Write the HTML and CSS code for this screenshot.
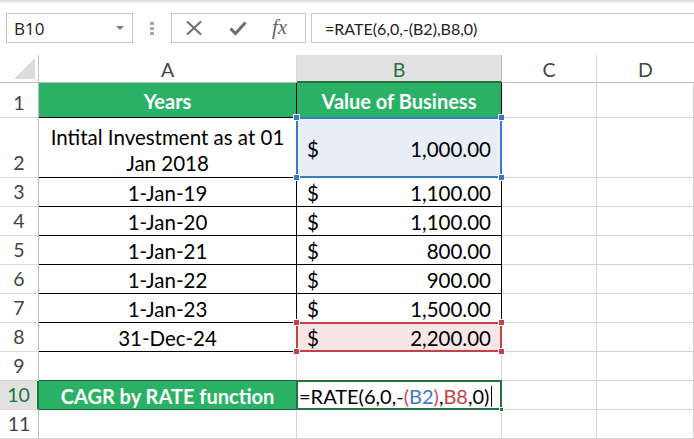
FILE: index.html
```html
<!DOCTYPE html>
<html>
<head>
<meta charset="utf-8">
<link rel="stylesheet" href="styles.css">
</head>
<body>
<div class="toolbar">
  <div class="namebox"><span class="nb-text">B10</span><span class="caret"></span></div>
  <div class="grip"><i></i><i></i><i></i></div>
  <div class="fbuttons">
    <svg class="ico" width="18" height="16" viewBox="0 0 18 16"><path d="M2 1.5 L16 14.5 M16 1.5 L2 14.5" stroke="#6d6d6d" stroke-width="2" fill="none"/></svg>
    <svg class="ico" width="18" height="16" viewBox="0 0 18 16"><path d="M1.5 8.5 L6.5 13.5 L16.5 2.5" stroke="#6d6d6d" stroke-width="3" fill="none"/></svg>
    <span class="fx">fx</span>
  </div>
  <div class="formula">=RATE(6,0,-(B2),B8,0)</div>
</div>
<div class="sheet">
  <div class="corner"><span class="tri"></span></div>
  <div class="ch">A</div>
  <div class="ch sel">B</div>
  <div class="ch">C</div>
  <div class="ch last">D</div>

  <div class="rh">1</div>
  <div class="c head tl">Years</div>
  <div class="c head tr">Value of Business</div>
  <div class="c"></div>
  <div class="c"></div>

  <div class="rh r2">2</div>
  <div class="c ta wrap">Intital Investment as at 01<br>Jan 2018</div>
  <div class="c tb money blue"><span>$</span><span>1,000.00</span><i class="h h1"></i><i class="h h2"></i><i class="h h3"></i><i class="h h4"></i></div>
  <div class="c"></div>
  <div class="c"></div>

  <div class="rh">3</div>
  <div class="c ta">1-Jan-19</div>
  <div class="c tb money"><span>$</span><span>1,100.00</span></div>
  <div class="c"></div>
  <div class="c"></div>

  <div class="rh">4</div>
  <div class="c ta">1-Jan-20</div>
  <div class="c tb money"><span>$</span><span>1,100.00</span></div>
  <div class="c"></div>
  <div class="c"></div>

  <div class="rh">5</div>
  <div class="c ta">1-Jan-21</div>
  <div class="c tb money"><span>$</span><span>800.00</span></div>
  <div class="c"></div>
  <div class="c"></div>

  <div class="rh">6</div>
  <div class="c ta">1-Jan-22</div>
  <div class="c tb money"><span>$</span><span>900.00</span></div>
  <div class="c"></div>
  <div class="c"></div>

  <div class="rh">7</div>
  <div class="c ta">1-Jan-23</div>
  <div class="c tb money"><span>$</span><span>1,500.00</span></div>
  <div class="c"></div>
  <div class="c"></div>

  <div class="rh">8</div>
  <div class="c ta">31-Dec-24</div>
  <div class="c tb money red"><span>$</span><span>2,200.00</span><i class="h h1"></i><i class="h h2"></i><i class="h h3"></i><i class="h h4"></i></div>
  <div class="c"></div>
  <div class="c"></div>

  <div class="rh">9</div>
  <div class="c"></div>
  <div class="c"></div>
  <div class="c"></div>
  <div class="c"></div>

  <div class="rh active">10</div>
  <div class="c cagr">CAGR by RATE function</div>
  <div class="c edit">=RATE(6,0,-<span class="pr">(</span><span class="bl">B2</span><span class="pr">)</span>,<span class="rd">B8</span>,0)<span class="cursor"></span><i class="gh"></i></div>
  <div class="c"></div>
  <div class="c"></div>

  <div class="rh">11</div>
  <div class="c"></div>
  <div class="c"></div>
  <div class="c"></div>
  <div class="c"></div>
</div>
</body>
</html>
```

FILE: styles.css
```css
* { box-sizing: border-box; }
html, body { margin: 0; padding: 0; background: #fff; overflow: hidden; }
body { width: 694px; height: 439px; font-family: Lato, "Open Sans", sans-serif; }

.toolbar {
  height: 55px;
  display: flex;
  align-items: flex-start;
  padding: 13px 0 0 6px;
  background: linear-gradient(#d6d6d6 0px, #ececec 2px, #fff 4px);
}
.namebox {
  width: 127px; height: 30px;
  border: 1px solid #c6c6c6;
  background: #fff;
  display: flex; align-items: center; justify-content: space-between;
  padding: 0 8px 0 7px;
  font-family: "Open Sans", sans-serif; font-size: 17px; color: #222;
}
.caret {
  width: 0; height: 0;
  border-left: 4px solid transparent; border-right: 4px solid transparent;
  border-top: 4px solid #7b7b7b;
}
.grip {
  width: 38px; height: 30px;
  display: flex; flex-direction: column; align-items: center; justify-content: center; gap: 2px;
}
.grip i { display: block; width: 4px; height: 3px; background: #a8a8a8; }
.fbuttons {
  width: 135px; height: 30px;
  border: 1px solid #c6c6c6;
  display: flex; align-items: center;
  padding-left: 13px; gap: 26px;
}
.fx {
  font-family: "Liberation Serif", serif; font-style: italic; font-size: 21px; color: #666;
  margin-left: -1px; margin-top: -2px;
}
.formula {
  flex: 1; height: 30px; margin-left: 5px; margin-right: -2px;
  border: 1px solid #c6c6c6;
  display: flex; align-items: center; padding-left: 13px;
  font-family: Lato, sans-serif; font-size: 16px; color: #222;
}

.sheet {
  display: grid;
  grid-template-columns: 39px 258px 205px 95px 97px;
  grid-template-rows: 28px 35px 60px repeat(9, 29px);
  font-size: 20.5px; color: #000;
}
.corner {
  border-right: 1px solid #c4c4c4; border-bottom: 1px solid #bdbdbd;
  display: flex; align-items: flex-end; justify-content: flex-end; padding: 0 3px 3px 0;
}
.tri {
  width: 0; height: 0;
  border-left: 21px solid transparent;
  border-bottom: 21px solid #dcdcdc;
}
.ch {
  border-bottom: 1px solid #bdbdbd; border-right: 1px solid #d9d9d9;
  display: flex; align-items: center; justify-content: center;
  color: #444; font-size: 19.5px; padding-top: 2px;
}
.ch.sel { background: #e1e1e1; color: #217346; border-bottom: 2px solid #217346; border-right-color: #bdbdbd; }
.ch.last { border-right: none; }
.rh {
  border-right: 1px solid #bdbdbd; border-bottom: 1px solid #dadada;
  display: flex; align-items: flex-end; justify-content: center;
  color: #444; font-size: 19.5px; padding-bottom: 3px;
}
.rh.active { background: #e1e1e1; color: #217346; border-right: 2px solid #217346; }
.c {
  border-right: 1px solid #d4d4d4; border-bottom: 1px solid #d4d4d4;
  position: relative;
  display: flex; align-items: center;
}
.c.head {
  background: #29b265; color: #fff; font-weight: bold; font-size: 20px;
  justify-content: center; border-bottom: 1px solid #000; border-right: 1px solid #000;
  padding-top: 2px;
}
.c.ta { justify-content: center; border-bottom: 1px solid #000; border-right: 1px solid #000; padding-top: 2px; }
.c.wrap { text-align: center; line-height: 26px; padding-top: 4px; }
.c.tb { border-bottom: 1px solid #000; border-right: 1px solid #000; }
.c.money { justify-content: space-between; padding: 2px 10px 0 10px; }
.c.blue { background: #e8eef8; }
.c.red { background: #f8e6e6; }
.c.blue::after, .c.red::after, .c.edit::after {
  content: ""; position: absolute; left: -1px; top: -1px; right: -1px; bottom: -1px;
  border: 2px solid #3d78c9;
}
.c.red::after { border-color: #c3424a; }
.c.edit::after { border-color: #217346; }
.h {
  position: absolute; width: 7px; height: 7px; background: #3d78c9; border: 1px solid #fff; z-index: 2;
}
.red .h { background: #c3424a; }
.h1 { left: -4px; top: -4px; }
.h2 { right: -4px; top: -4px; }
.h3 { left: -4px; bottom: -4px; }
.h4 { right: -4px; bottom: -4px; }
.c.cagr {
  background: #29b265; color: #fff; font-weight: bold; font-size: 20px; justify-content: center;
  border: 1px solid #1e5e3a; border-left: none; margin-top: -1px; padding-top: 2px;
}
.c.edit { padding: 2px 0 0 2px; white-space: nowrap; font-size: 20px; }
.pr { color: #d0466a; }
.bl { color: #3d78c9; }
.rd { color: #c3424a; }
.cursor { display: inline-block; width: 1px; height: 21px; background: #000; margin-left: 2px; }
.gh {
  position: absolute; right: -3px; bottom: -3px; width: 5px; height: 5px; background: #217346; border: 1px solid #fff; z-index: 2;
}
```
